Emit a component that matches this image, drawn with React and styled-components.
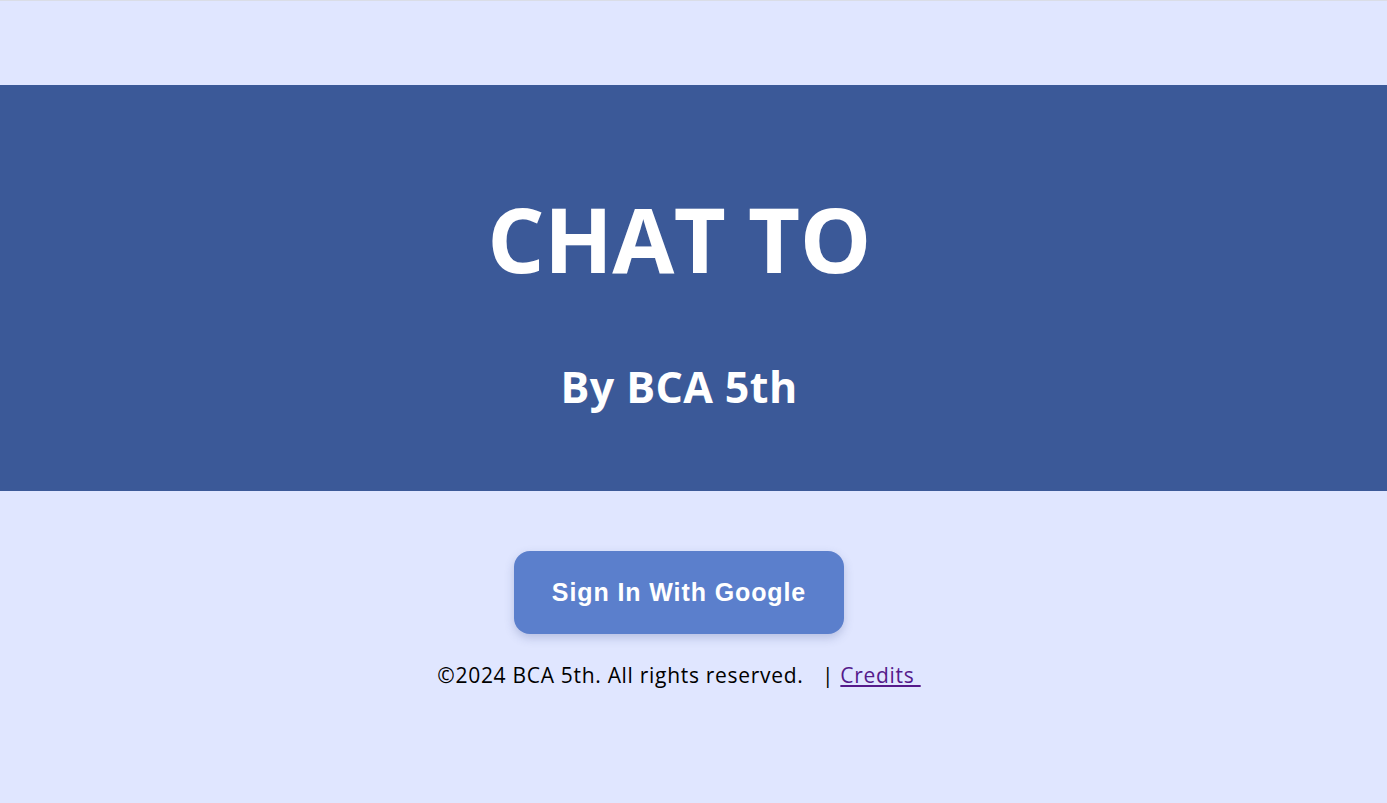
import React from "react";
import styled, { createGlobalStyle } from "styled-components";

const Global = createGlobalStyle`
  html, body { margin: 0; padding: 0; }
  body {
    background: #e0e6ff;
    font-family: "Open Sans", "Noto Sans", sans-serif;
    border-top: 1px solid #dadde6;
    min-height: 802px;
  }
`;

const Page = styled.div`
  display: flex;
  flex-direction: column;
  align-items: center;
  padding-top: 84px;
`;

const Banner = styled.header`
  width: 100%;
  height: 406px;
  box-sizing: border-box;
  background: #3b5998;
  color: #ffffff;
  display: flex;
  flex-direction: column;
  align-items: center;
  padding: 98px 29px 0 0;
`;

const Title = styled.h1`
  margin: 0;
  font-size: 90px;
  line-height: 110px;
  font-weight: 700;
  letter-spacing: -0.6px;
`;

const Subtitle = styled.h2`
  margin: 66px 0 0;
  font-size: 43px;
  line-height: 56px;
  font-weight: 700;
  letter-spacing: 0.4px;
`;

const Lower = styled.section`
  width: 100%;
  box-sizing: border-box;
  padding-right: 29px;
  display: flex;
  flex-direction: column;
  align-items: center;
`;

const SignInButton = styled.button`
  margin-top: 60px;
  width: 330px;
  height: 83px;
  border: none;
  border-radius: 16px;
  background: #5b7fcc;
  color: #ffffff;
  font-family: "Liberation Sans", Arial, sans-serif;
  font-weight: 700;
  font-size: 25px;
  letter-spacing: 0.9px;
  box-shadow: 0 4px 10px rgba(60, 80, 140, 0.25);
  cursor: pointer;
`;

const Footer = styled.p`
  margin: 26px 0 0;
  font-size: 21px;
  line-height: 30px;
  letter-spacing: 0.7px;
  color: #000000;
`;

const CreditsLink = styled.a`
  color: #551a8b;
  text-decoration: underline;
`;

export default function App() {
  return (
    <>
      <Global />
      <Page>
        <Banner>
          <Title>CHAT TO</Title>
          <Subtitle>By BCA 5th</Subtitle>
        </Banner>
        <Lower>
          <SignInButton>Sign In With Google</SignInButton>
          <Footer>
            ©2024 BCA 5th. All rights reserved.&nbsp;&nbsp;&nbsp;|{" "}
            <CreditsLink href="#">Credits&nbsp;</CreditsLink>
          </Footer>
        </Lower>
      </Page>
    </>
  );
}
